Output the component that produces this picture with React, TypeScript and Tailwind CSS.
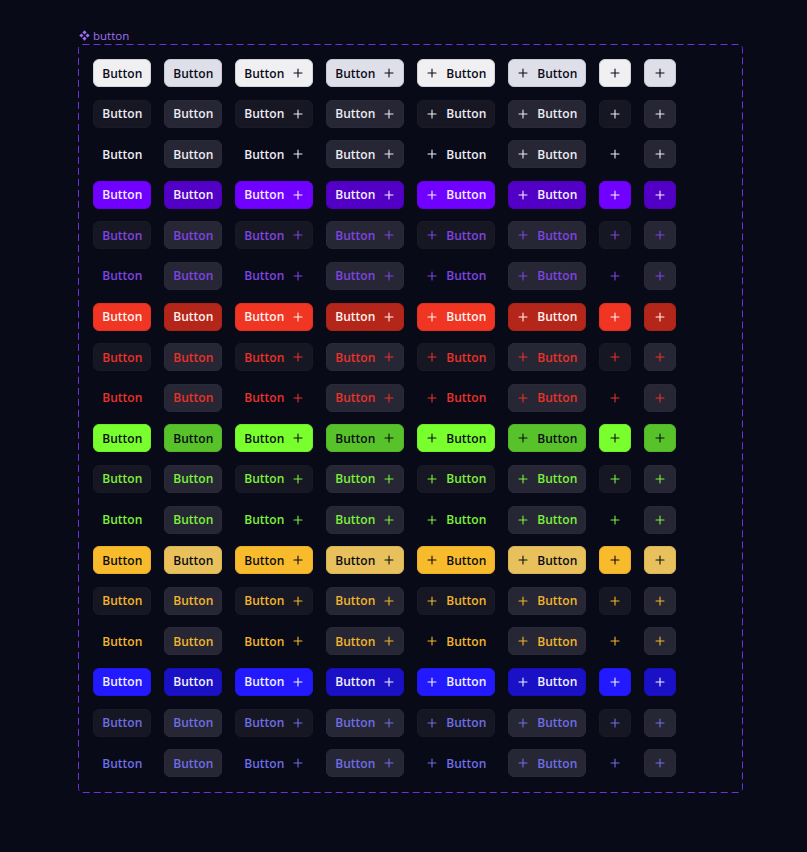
import React from "react";

type Tone = {
  solidA: string;
  solidB: string;
  soft: string;
};

const tones: Tone[] = [
  {
    solidA: "bg-[#f0f0f3] text-[#0b0b16] border-[#d2d2da]",
    solidB: "bg-[#dfdfea] text-[#0b0b16] border-[#c9c9d6]",
    soft: "text-[#ececf3]",
  },
  {
    solidA: "bg-[#7000ff] text-[#f3efff] border-[#6a00f0]",
    solidB: "bg-[#5300c6] text-[#f3efff] border-[#4c00b8]",
    soft: "text-[#7f45e2]",
  },
  {
    solidA: "bg-[#f03522] text-[#fff1ef] border-[#e23020]",
    solidB: "bg-[#b5261a] text-[#fff1ef] border-[#a82318]",
    soft: "text-[#ea3229]",
  },
  {
    solidA: "bg-[#7aff2e] text-[#0a0c14] border-[#70ee2a]",
    solidB: "bg-[#58c22a] text-[#0a0c14] border-[#52b527]",
    soft: "text-[#7cf23a]",
  },
  {
    solidA: "bg-[#f7bb2c] text-[#0a0c14] border-[#e8ae28]",
    solidB: "bg-[#e8c15c] text-[#0a0c14] border-[#d9b454]",
    soft: "text-[#f2b62c]",
  },
  {
    solidA: "bg-[#2319ff] text-[#f2f0ff] border-[#2016ee]",
    solidB: "bg-[#1a10c6] text-[#f2f0ff] border-[#170eb8]",
    soft: "text-[#6e6ee6]",
  },
];

const Plus = () => (
  <svg width="12" height="12" viewBox="0 0 12 12" fill="none" className="shrink-0">
    <path d="M6 2v8M2 6h8" stroke="currentColor" strokeWidth="1.1" strokeLinecap="round" />
  </svg>
);

type Kind = "solid" | "soft" | "ghost";

function bgFor(kind: Kind, tone: Tone, alt: boolean) {
  if (kind === "solid") return `border ${alt ? tone.solidB : tone.solidA}`;
  if (kind === "soft")
    return `border ${alt ? "bg-[#262634] border-[#29293a]" : "bg-[#171723] border-[#1a1a27]"} ${tone.soft}`;
  return `border ${alt ? "bg-[#262634] border-[#29293a]" : "bg-transparent border-transparent"} ${tone.soft}`;
}

function Btn({
  kind,
  tone,
  alt,
  icon,
  width,
}: {
  kind: Kind;
  tone: Tone;
  alt: boolean;
  icon: "none" | "trail" | "lead" | "only";
  width: string;
}) {
  return (
    <div
      className={`${width} h-[28px] shrink-0 rounded-[6px] flex items-center justify-center gap-[8px] text-[12px] font-semibold leading-none ${bgFor(
        kind,
        tone,
        alt
      )}`}
    >
      {icon === "lead" && <Plus />}
      {icon !== "only" && <span className="pt-[1px]">Button</span>}
      {icon === "trail" && <Plus />}
      {icon === "only" && <Plus />}
    </div>
  );
}

function Row({ kind, tone }: { kind: Kind; tone: Tone }) {
  return (
    <div className="flex items-center gap-[13px]">
      <Btn kind={kind} tone={tone} alt={false} icon="none" width="w-[58px]" />
      <Btn kind={kind} tone={tone} alt={true} icon="none" width="w-[58px]" />
      <Btn kind={kind} tone={tone} alt={false} icon="trail" width="w-[78px]" />
      <Btn kind={kind} tone={tone} alt={true} icon="trail" width="w-[78px]" />
      <Btn kind={kind} tone={tone} alt={false} icon="lead" width="w-[78px]" />
      <Btn kind={kind} tone={tone} alt={true} icon="lead" width="w-[78px]" />
      <Btn kind={kind} tone={tone} alt={false} icon="only" width="w-[32px]" />
      <Btn kind={kind} tone={tone} alt={true} icon="only" width="w-[32px]" />
    </div>
  );
}

const ComponentIcon = () => (
  <svg width="11" height="11" viewBox="0 0 11 11" fill="#9d6cf2">
    <path d="M5.5 0.3 L7.6 2.4 L5.5 4.5 L3.4 2.4 Z" />
    <path d="M5.5 6.5 L7.6 8.6 L5.5 10.7 L3.4 8.6 Z" />
    <path d="M2.4 3.4 L4.5 5.5 L2.4 7.6 L0.3 5.5 Z" />
    <path d="M8.6 3.4 L10.7 5.5 L8.6 7.6 L6.5 5.5 Z" />
  </svg>
);

export default function App() {
  const kinds: Kind[] = ["solid", "soft", "ghost"];
  return (
    <div
      className="min-h-[852px] w-full bg-[#080a18] pt-[29px] pl-[78px]"
      style={{ fontFamily: '"Open Sans", "Noto Sans", sans-serif' }}
    >
      <div className="flex items-center gap-[3px] h-[13px] pl-[1px] mb-[2px]">
        <ComponentIcon />
        <span
          className="text-[11.5px] leading-[13px] text-[#a070ec]"
          style={{ fontFamily: '"Open Sans", Inter, sans-serif' }}
        >
          button
        </span>
      </div>
      <div className="relative w-[665px] h-[749px] pt-[15px] pl-[15.3px]">
        <svg
          className="absolute inset-0 pointer-events-none"
          width="665"
          height="749"
          viewBox="0 0 665 749"
          fill="none"
        >
          <rect
            x="0.5"
            y="0.5"
            width="664"
            height="748"
            rx="4"
            stroke="#6d32dc"
            strokeWidth="1"
            strokeDasharray="7 4"
          />
        </svg>
        <div className="flex flex-col gap-[12.6px]">
          {tones.map((tone, ti) =>
            kinds.map((k) => <Row key={`${ti}-${k}`} kind={k} tone={tone} />)
          )}
        </div>
      </div>
    </div>
  );
}
